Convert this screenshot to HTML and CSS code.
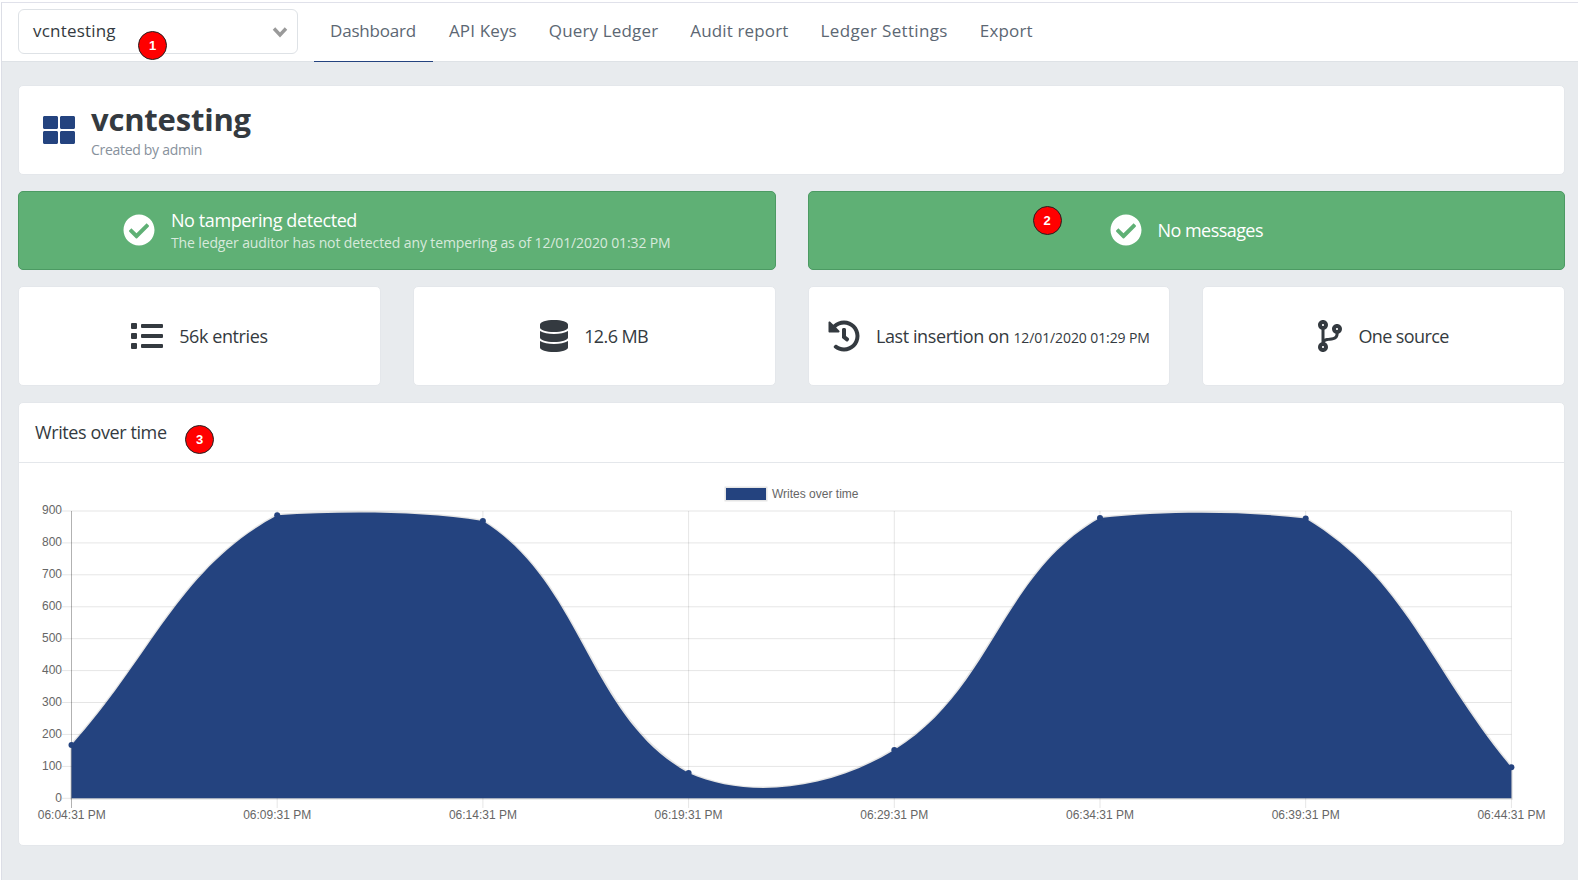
FILE: index.html
```html
<!DOCTYPE html>
<html lang="en">
<head>
    <meta charset="UTF-8">
    <meta name="viewport" content="width=device-width, initial-scale=1.0">
    <title>vcntesting - Dashboard</title>
    <link rel="stylesheet" href="styles.css">
</head>
<body>
    <div class="page">
        <nav class="navbar">
            <div class="ledger-select">
                <span class="select-value">vcntesting</span>
                <svg class="chevron" viewBox="0 0 16 12"><polyline points="2,2.5 8,9 14,2.5"/></svg>
                <span class="badge badge-one">1</span>
            </div>
            <ul class="tabs">
                <li class="tab active">Dashboard</li>
                <li class="tab">API Keys</li>
                <li class="tab">Query Ledger</li>
                <li class="tab">Audit report</li>
                <li class="tab tab-wide">Ledger Settings</li>
                <li class="tab">Export</li>
            </ul>
        </nav>

        <main class="content">
            <section class="card title-card">
                <svg class="title-icon" viewBox="0 0 512 512"><path d="M296 32h192c13.255 0 24 10.745 24 24v160c0 13.255-10.745 24-24 24H296c-13.255 0-24-10.745-24-24V56c0-13.255 10.745-24 24-24zm-80 0H24C10.745 32 0 42.745 0 56v160c0 13.255 10.745 24 24 24h192c13.255 0 24-10.745 24-24V56c0-13.255-10.745-24-24-24zM0 296v160c0 13.255 10.745 24 24 24h192c13.255 0 24-10.745 24-24V296c0-13.255-10.745-24-24-24H24c-13.255 0-24 10.745-24 24zm296 184h192c13.255 0 24-10.745 24-24V296c0-13.255-10.745-24-24-24H296c-13.255 0-24 10.745-24 24v160c0 13.255 10.745 24 24 24z"/></svg>
                <div class="title-text">
                    <h1 class="ledger-name">vcntesting</h1>
                    <div class="created-by">Created by admin</div>
                </div>
            </section>

            <section class="alerts">
                <div class="alert">
                    <svg class="alert-icon" viewBox="0 0 512 512"><path d="M504 256c0 136.967-111.033 248-248 248S8 392.967 8 256 119.033 8 256 8s248 111.033 248 248zM227.314 387.314l184-184c6.248-6.248 6.248-16.379 0-22.627l-22.627-22.627c-6.248-6.249-16.379-6.249-22.628 0L216 308.118l-70.059-70.059c-6.248-6.248-16.379-6.248-22.628 0l-22.627 22.627c-6.248 6.248-6.248 16.379 0 22.627l104 104c6.249 6.249 16.379 6.249 22.628.001z"/></svg>
                    <div class="alert-text">
                        <div class="alert-title">No tampering detected</div>
                        <div class="alert-sub">The ledger auditor has not detected any tempering as of 12/01/2020 01:32 PM</div>
                    </div>
                </div>
                <div class="alert">
                    <span class="badge badge-two">2</span>
                    <svg class="alert-icon" viewBox="0 0 512 512"><path d="M504 256c0 136.967-111.033 248-248 248S8 392.967 8 256 119.033 8 256 8s248 111.033 248 248zM227.314 387.314l184-184c6.248-6.248 6.248-16.379 0-22.627l-22.627-22.627c-6.248-6.249-16.379-6.249-22.628 0L216 308.118l-70.059-70.059c-6.248-6.248-16.379-6.248-22.628 0l-22.627 22.627c-6.248 6.248-6.248 16.379 0 22.627l104 104c6.249 6.249 16.379 6.249 22.628.001z"/></svg>
                    <div class="alert-title alert-title-short">No messages</div>
                </div>
            </section>

            <section class="stats">
                <div class="card stat">
                    <svg class="stat-icon" viewBox="0 0 512 512"><path d="M80 368H16a16 16 0 0 0-16 16v64a16 16 0 0 0 16 16h64a16 16 0 0 0 16-16v-64a16 16 0 0 0-16-16zm0-320H16A16 16 0 0 0 0 64v64a16 16 0 0 0 16 16h64a16 16 0 0 0 16-16V64a16 16 0 0 0-16-16zm0 160H16a16 16 0 0 0-16 16v64a16 16 0 0 0 16 16h64a16 16 0 0 0 16-16v-64a16 16 0 0 0-16-16zm416 176H176a16 16 0 0 0-16 16v32a16 16 0 0 0 16 16h320a16 16 0 0 0 16-16v-32a16 16 0 0 0-16-16zm0-320H176a16 16 0 0 0-16 16v32a16 16 0 0 0 16 16h320a16 16 0 0 0 16-16V80a16 16 0 0 0-16-16zm0 160H176a16 16 0 0 0-16 16v32a16 16 0 0 0 16 16h320a16 16 0 0 0 16-16v-32a16 16 0 0 0-16-16z"/></svg>
                    <span>56k entries</span>
                </div>
                <div class="card stat">
                    <svg class="stat-icon icon-database" viewBox="0 0 448 512"><path d="M448 73.143v45.714C448 159.143 347.667 192 224 192S0 159.143 0 118.857V73.143C0 32.857 100.333 0 224 0s224 32.857 224 73.143zM448 176v102.857C448 319.143 347.667 352 224 352S0 319.143 0 278.857V176c48.125 33.143 136.208 48.572 224 48.572S399.874 209.143 448 176zm0 160v102.857C448 479.143 347.667 512 224 512S0 479.143 0 438.857V336c48.125 33.143 136.208 48.572 224 48.572S399.874 369.143 448 336z"/></svg>
                    <span class="size-label">12.6 MB</span>
                </div>
                <div class="card stat">
                    <svg class="stat-icon" viewBox="0 0 512 512"><path d="M504 255.531c.253 136.64-111.18 248.372-247.82 248.468-59.015.042-113.223-20.53-155.822-54.911-11.077-8.94-11.905-25.541-1.839-35.607l11.267-11.267c8.609-8.609 22.353-9.551 31.891-1.984C173.062 425.135 212.781 440 256 440c101.705 0 184-82.311 184-184 0-101.705-82.311-184-184-184-48.814 0-93.149 18.969-126.068 49.932l50.754 50.754c10.08 10.08 2.941 27.314-11.313 27.314H24c-8.837 0-16-7.163-16-16V38.627c0-14.254 17.234-21.393 27.314-11.314l49.372 49.372C129.209 34.136 189.552 8 256 8c136.81 0 247.747 110.78 248 247.531zm-180.912 78.784l9.823-12.63c8.138-10.463 6.253-25.542-4.21-33.679L288 256.349V152c0-13.255-10.745-24-24-24h-16c-13.255 0-24 10.745-24 24v135.651l65.409 50.874c10.463 8.137 25.541 6.253 33.679-4.21z"/></svg>
                    <span>Last insertion on <small class="stat-date">12/01/2020 01:29 PM</small></span>
                </div>
                <div class="card stat">
                    <svg class="stat-icon icon-branch" viewBox="0 0 384 512"><path d="M384 144c0-44.2-35.8-80-80-80s-80 35.8-80 80c0 36.4 24.3 67.1 57.5 76.8-.6 16.1-4.2 28.5-11 36.9-15.4 19.2-49.3 22.4-85.2 25.7-28.2 2.6-57.4 5.4-81.3 16.9v-144c32.5-10.2 56-40.5 56-76.3 0-44.2-35.8-80-80-80S0 35.8 0 80c0 35.8 23.5 66.1 56 76.3v199.3C23.5 365.9 0 396.2 0 432c0 44.2 35.8 80 80 80s80-35.8 80-80c0-34-21.2-63.1-51.2-74.6 3.1-5.2 7.8-9.8 14.9-13.4 16.2-8.2 40.4-10.4 66.1-12.8 42.2-3.9 90-8.4 118.2-43.4 14-17.4 21.1-39.8 21.5-67.9 31.6-10.8 54.5-40.7 54.5-75.9zM80 64c8.8 0 16 7.2 16 16s-7.2 16-16 16-16-7.2-16-16 7.2-16 16-16zm0 384c-8.8 0-16-7.2-16-16s7.2-16 16-16 16 7.2 16 16-7.2 16-16 16zm224-320c8.8 0 16 7.2 16 16s-7.2 16-16 16-16-7.2-16-16 7.2-16 16-16z"/></svg>
                    <span class="source-label">One source</span>
                </div>
            </section>

            <section class="card chart-card">
                <header class="chart-header">
                    Writes over time
                    <span class="badge badge-three">3</span>
                </header>
                <!-- viewBox uses page coordinates so the numbers line up with the plot area -->
                <svg class="chart" viewBox="19 463 1545 382">
                    <g class="grid">
                        <path d="M62 511H1511.4M62 542.9H1511.4M62 574.8H1511.4M62 606.8H1511.4M62 638.7H1511.4M62 670.6H1511.4M62 702.5H1511.4M62 734.4H1511.4M62 766.4H1511.4M62 798.3H1511.4"/>
                        <path d="M277.2 511V808M482.9 511V808M688.6 511V808M894.3 511V808M1100 511V808M1305.7 511V808M1511.4 511V808"/>
                    </g>
                    <path class="axis" d="M71.5 511V808"/>
                    <path class="area" d="M71.5 745C153.8 653.1 178.5 569 277.2 515.3C343.1 511 419.1 511 482.9 521C583.7 584.1 588 717 688.6 773C745 798.3 825 792 894.3 750C993 688.8 1001.1 573.7 1100 518C1165.6 511 1241.7 511 1305.7 518.5C1406.2 579.4 1429.1 667.8 1511.4 767.3V798.3H71.5Z"/>
                    <g class="dots">
                        <circle cx="71.5" cy="745" r="3"/>
                        <circle cx="277.2" cy="515.3" r="3"/>
                        <circle cx="482.9" cy="521" r="3"/>
                        <circle cx="688.6" cy="773" r="3"/>
                        <circle cx="894.3" cy="750" r="3"/>
                        <circle cx="1100" cy="518" r="3"/>
                        <circle cx="1305.7" cy="518.5" r="3"/>
                        <circle cx="1511.4" cy="767.3" r="3"/>
                    </g>
                    <rect class="legend-box" x="726" y="488" width="40" height="12"/>
                    <text class="legend-label" x="772" y="498">Writes over time</text>
                    <g class="y-labels">
                        <text x="62" y="514">900</text>
                        <text x="62" y="546">800</text>
                        <text x="62" y="578">700</text>
                        <text x="62" y="610">600</text>
                        <text x="62" y="642">500</text>
                        <text x="62" y="674">400</text>
                        <text x="62" y="706">300</text>
                        <text x="62" y="738">200</text>
                        <text x="62" y="770">100</text>
                        <text x="62" y="802">0</text>
                    </g>
                    <g class="x-labels">
                        <text x="71.8" y="819">06:04:31 PM</text>
                        <text x="277.2" y="819">06:09:31 PM</text>
                        <text x="482.9" y="819">06:14:31 PM</text>
                        <text x="688.6" y="819">06:19:31 PM</text>
                        <text x="894.3" y="819">06:29:31 PM</text>
                        <text x="1100" y="819">06:34:31 PM</text>
                        <text x="1305.7" y="819">06:39:31 PM</text>
                        <text x="1511.4" y="819">06:44:31 PM</text>
                    </g>
                </svg>
            </section>
        </main>
    </div>
</body>
</html>
```

FILE: styles.css
```css
html, body {
    margin: 0;
    height: 100%;
    background: #fff;
}
body {
    font-family: "Open Sans", "Noto Sans", sans-serif;
    color: #343a40;
    overflow: hidden;
}
.page {
    margin: 2px 0 0 1px;
    height: calc(100% - 2px);
    box-sizing: border-box;
    border-top: 1px solid #e0e1ea;
    border-left: 1px solid #dcdee6;
    background: #e8ebee;
}
.navbar {
    display: flex;
    align-items: flex-start;
    height: 59px;
    box-sizing: border-box;
    padding: 6px 0 0 16px;
    background: #fff;
    border-bottom: 1px solid #dee2e6;
}
.ledger-select {
    position: relative;
    display: flex;
    align-items: center;
    justify-content: space-between;
    box-sizing: border-box;
    width: 280px;
    height: 45px;
    padding: 0 9px 0 14px;
    border: 1px solid #dee2e6;
    border-radius: 6px;
    font-size: 17px;
    letter-spacing: 0.2px;
    color: #343a40;
}
.select-value {
    margin-bottom: 2px;
}
.chevron {
    width: 16px;
    height: 12px;
    fill: none;
    stroke: #9a9a9a;
    stroke-width: 3.4;
}
.tabs {
    display: flex;
    list-style: none;
    margin: -6px 0 0 16px;
    padding: 0;
}
.tab {
    height: 58px;
    box-sizing: border-box;
    padding: 0 16px;
    line-height: 56px;
    font-size: 17px;
    letter-spacing: 0.15px;
    color: #5c6773;
}
.tab-wide {
    letter-spacing: 0.35px;
}
.tab.active {
    height: 59px;
    padding-right: 17px;
    border-bottom: 1px solid #24437f;
    letter-spacing: -0.2px;
}
.content {
    padding: 23px 13px 0 16px;
    display: flex;
    flex-direction: column;
    gap: 16px;
}
.card {
    background: #fff;
    border: 1px solid #e4e7eb;
    border-radius: 5px;
}
.title-card {
    display: flex;
    align-items: center;
    height: 90px;
    box-sizing: border-box;
    padding: 0 0 0 24px;
    gap: 16px;
}
.title-icon {
    width: 32px;
    height: 32px;
    fill: #24437f;
}
.title-text {
    margin-top: 2px;
}
.ledger-name {
    margin: 0;
    font-size: 31px;
    line-height: 35px;
    font-weight: 700;
    letter-spacing: -0.2px;
    color: #343a40;
}
.created-by {
    margin-top: 3px;
    font-size: 14px;
    line-height: 20px;
    letter-spacing: -0.3px;
    color: #87919c;
}
.alerts {
    display: grid;
    grid-template-columns: 1fr 1fr;
    gap: 32px;
}
.alert {
    position: relative;
    display: flex;
    align-items: center;
    justify-content: center;
    gap: 16px;
    height: 79px;
    box-sizing: border-box;
    padding-bottom: 2px;
    background: #5fb075;
    border: 1px solid #4c9a63;
    border-radius: 5px;
    color: #fff;
}
.alert-icon {
    width: 32px;
    height: 32px;
    fill: #fff;
}
.alert-text {
    margin-top: 2px;
}
.alert-title {
    font-size: 18px;
    line-height: 24px;
    letter-spacing: -0.4px;
}
.alert-title-short {
    letter-spacing: -0.55px;
}
.alert-sub {
    margin-top: 1px;
    font-size: 14px;
    line-height: 20px;
    letter-spacing: -0.12px;
    color: rgba(255, 255, 255, 0.75);
}
.stats {
    display: grid;
    grid-template-columns: repeat(4, 1fr);
    gap: 32px;
}
.stat {
    display: flex;
    align-items: center;
    justify-content: center;
    gap: 16px;
    height: 100px;
    box-sizing: border-box;
    font-size: 18px;
    letter-spacing: -0.4px;
}
.stat-icon {
    width: 32px;
    height: 32px;
    fill: #343a40;
}
.icon-database {
    width: 28px;
}
.icon-branch {
    width: 24px;
}
.stat-date {
    font-size: 14px;
    letter-spacing: -0.1px;
}
.size-label {
    letter-spacing: -0.6px;
}
.source-label {
    letter-spacing: -0.6px;
}
.chart-card {
    height: 444px;
    box-sizing: border-box;
}
.chart-header {
    position: relative;
    height: 60px;
    box-sizing: border-box;
    padding: 17px 16px 0;
    font-size: 18px;
    line-height: 24px;
    letter-spacing: -0.4px;
    border-bottom: 1px solid #e4e7eb;
}
.chart {
    display: block;
    width: 1545px;
    height: 382px;
}
.grid path {
    fill: none;
    stroke: rgba(0, 0, 0, 0.1);
    stroke-width: 1;
}
.axis {
    fill: none;
    stroke: rgba(0, 0, 0, 0.3);
}
.area {
    fill: #24437f;
    stroke: rgba(0, 0, 0, 0.1);
    stroke-width: 3;
    paint-order: stroke;
}
.dots circle {
    fill: #24437f;
}
.legend-box {
    fill: #24437f;
    stroke: rgba(0, 0, 0, 0.1);
    stroke-width: 3;
    paint-order: stroke;
}
.chart text {
    font-family: "Liberation Sans", Arial, sans-serif;
    font-size: 12px;
    fill: #666;
}
.y-labels text {
    text-anchor: end;
}
.x-labels text {
    text-anchor: middle;
}
.badge {
    position: absolute;
    display: flex;
    align-items: center;
    justify-content: center;
    box-sizing: border-box;
    width: 29px;
    height: 29px;
    border: 1px solid #222;
    border-radius: 50%;
    background: #f00;
    color: #fff;
    font-family: "Liberation Sans", Arial, sans-serif;
    font-size: 13px;
    font-weight: 700;
    letter-spacing: 0;
    line-height: 1;
}
.badge-one {
    left: 119px;
    top: 21px;
}
.badge-two {
    left: 224px;
    top: 14px;
}
.badge-three {
    left: 166px;
    top: 22px;
}
```
